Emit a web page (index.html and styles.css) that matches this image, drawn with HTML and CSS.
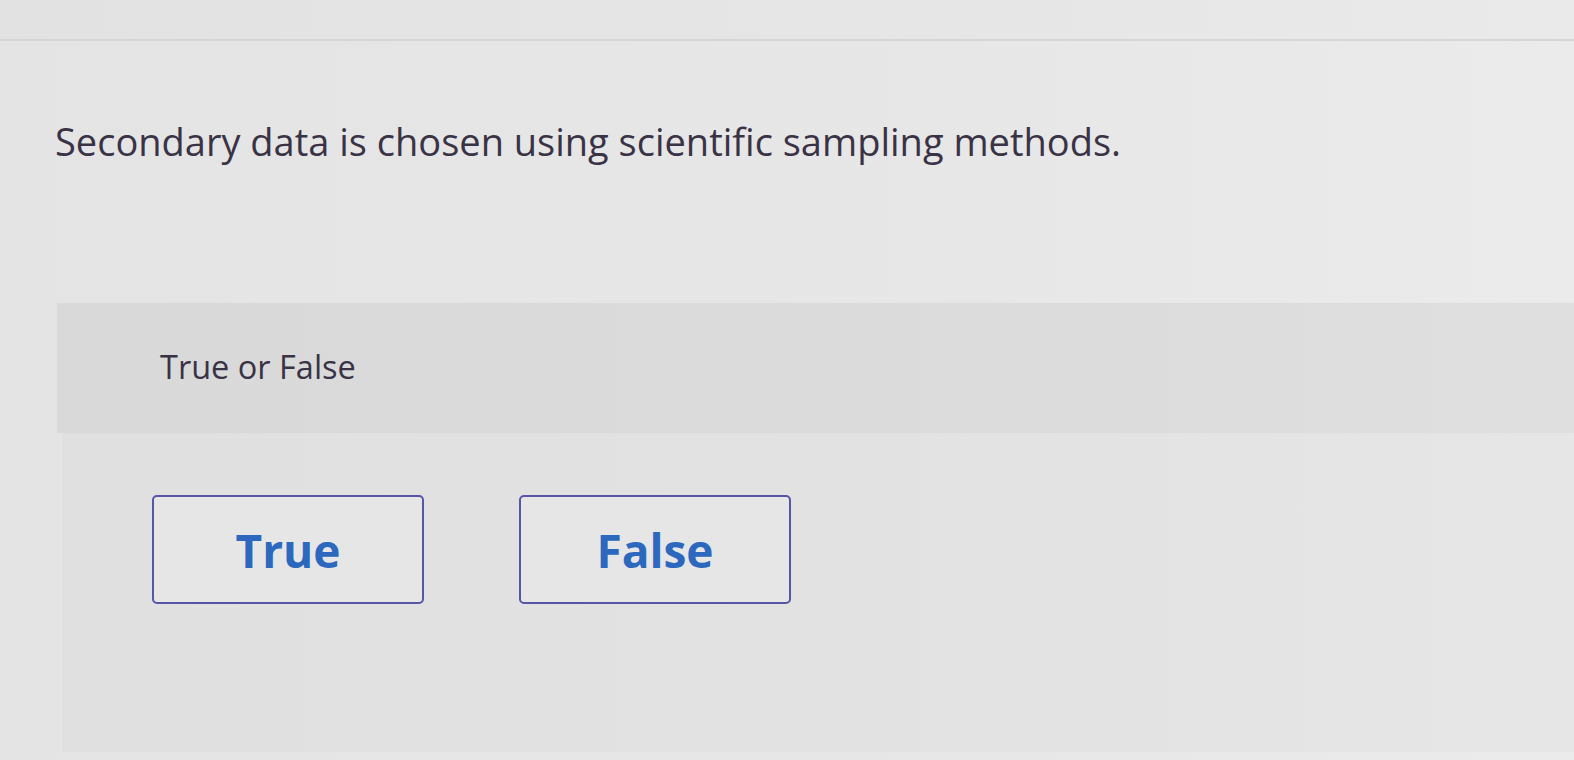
FILE: index.html
```html
<!DOCTYPE html>
<html lang="en">
<head>
<meta charset="utf-8">
<title>True or False</title>
<link rel="stylesheet" href="styles.css">
</head>
<body>
  <div class="topbar"></div>
  <main class="page">
    <p class="question">Secondary data is chosen using scientific sampling methods.</p>
    <section class="card">
      <div class="prompt">True or False</div>
      <div class="answers">
        <button class="choice" type="button">True</button>
        <button class="choice" type="button">False</button>
      </div>
    </section>
  </main>
</body>
</html>
```
FILE: styles.css
```css
html, body {
  margin: 0;
  padding: 0;
}
body {
  width: 1574px;
  height: 760px;
  overflow: hidden;
  background: linear-gradient(90deg, #e4e4e4 0%, #e7e7e7 60%, #ebebeb 100%);
  font-family: "Open Sans", Lato, "Liberation Sans", sans-serif;
  color: #3a3346;
}
.topbar {
  height: 39px;
  border-bottom: 2px solid #d6d6d6;
  background: linear-gradient(90deg, #e2e2e2 0%, #e6e6e6 60%, #eaeaea 100%);
}
.page {
  display: flex;
  flex-direction: column;
}
.question {
  margin: 78px 0 0 55px;
  font-size: 38px;
  line-height: 44px;
  color: #3a3346;
}
.card {
  margin: 140px 0 0 57px;
  display: flex;
  flex-direction: column;
}
.prompt {
  height: 130px;
  box-sizing: border-box;
  padding: 46px 0 0 103px;
  background: linear-gradient(90deg, #d9d9d9 0%, #dcdcdc 70%, #dfdfdf 100%);
  font-size: 32.5px;
  line-height: 36px;
  color: #3a3346;
}
.answers {
  margin-left: 5px;
  height: 319px;
  box-sizing: border-box;
  padding: 62px 0 0 90px;
  display: flex;
  align-items: flex-start;
  gap: 95px;
  background: linear-gradient(90deg, #e0e0e0 0%, #e3e3e3 70%, #e6e6e6 100%);
}
.choice {
  width: 272px;
  height: 109px;
  box-sizing: border-box;
  border: 2px solid #5656a6;
  border-radius: 5px;
  background: #e6e6e6;
  font-family: "Open Sans", Lato, "Liberation Sans", sans-serif;
  font-weight: 700;
  font-size: 46px;
  color: #2c68bd;
  padding: 0;
  cursor: pointer;
}
```
